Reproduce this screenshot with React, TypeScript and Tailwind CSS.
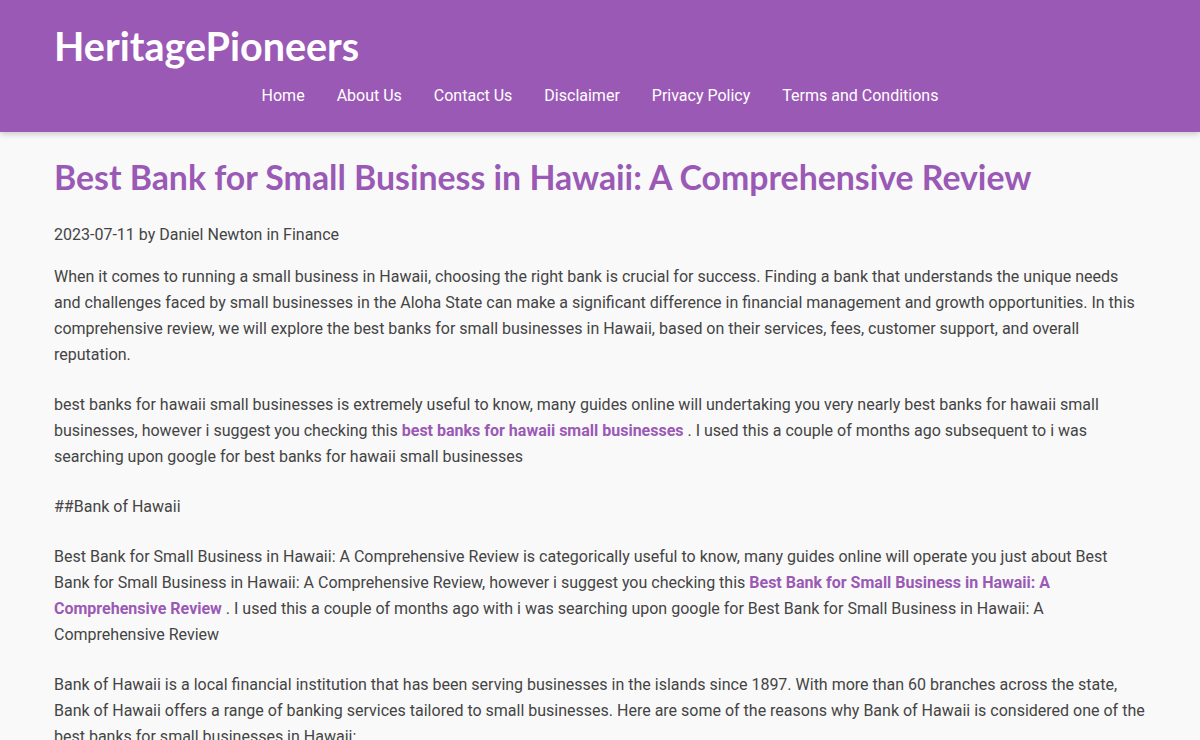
export default function App() {
  const link = 'font-bold text-[#9b59b6]';
  return (
    <div className="min-h-screen bg-[#f9f9f9] font-['Roboto',sans-serif] text-[16px] text-[#444]">
      <header className="bg-[#9b59b6] px-[54px] pb-[23px] pt-[22px] shadow-[0_2px_6px_rgba(0,0,0,0.2)]">
        <div className="flex h-[48px] items-center font-['Lato',sans-serif] text-[39.5px] font-bold leading-[48px] text-white">
          HeritagePioneers
        </div>
        <nav className="mt-[13px] flex justify-center gap-8 leading-[26px] text-white">
          <a>Home</a>
          <a>About Us</a>
          <a>Contact Us</a>
          <a>Disclaimer</a>
          <a>Privacy Policy</a>
          <a>Terms and Conditions</a>
        </nav>
      </header>

      <main className="px-[54px] pt-[25px]">
        <h1 className="font-['Lato',sans-serif] text-[33.8px] font-bold leading-[40px] text-[#9b59b6]">
          Best Bank for Small Business in Hawaii: A Comprehensive Review
        </h1>
        <p className="mt-[25px] leading-[26px]">2023-07-11 by Daniel Newton in Finance</p>

        <div className="mt-[16px] space-y-[24px] leading-[26px]">
          <p>
            When it comes to running a small business in Hawaii, choosing the right bank is crucial for success. Finding a
            bank that understands the unique needs and challenges faced by small businesses in the Aloha State can make a
            significant difference in financial management and growth opportunities. In this comprehensive review, we will
            explore the best banks for small businesses in Hawaii, based on their services, fees, customer support, and
            overall reputation.
          </p>
          <p>
            best banks for hawaii small businesses is extremely useful to know, many guides online will undertaking you very
            nearly best banks for hawaii small businesses, however i suggest you checking this{' '}
            <a className={link}>best banks for hawaii small businesses</a> . I used this a couple of months ago subsequent to
            i was searching upon google for best banks for hawaii small businesses
          </p>
          <p>##Bank of Hawaii</p>
          <p>
            Best Bank for Small Business in Hawaii: A Comprehensive Review is categorically useful to know, many guides
            online will operate you just about Best Bank for Small Business in Hawaii: A Comprehensive Review, however i
            suggest you checking this{' '}
            <a className={link}>Best Bank for Small Business in Hawaii: A Comprehensive Review</a> . I used this a couple of
            months ago with i was searching upon google for Best Bank for Small Business in Hawaii: A Comprehensive Review
          </p>
          <p>
            Bank of Hawaii is a local financial institution that has been serving businesses in the islands since 1897. With
            more than 60 branches across the state, Bank of Hawaii offers a range of banking services tailored to small
            businesses. Here are some of the reasons why Bank of Hawaii is considered one of the best banks for small
            businesses in Hawaii:
          </p>
        </div>
      </main>
    </div>
  );
}
